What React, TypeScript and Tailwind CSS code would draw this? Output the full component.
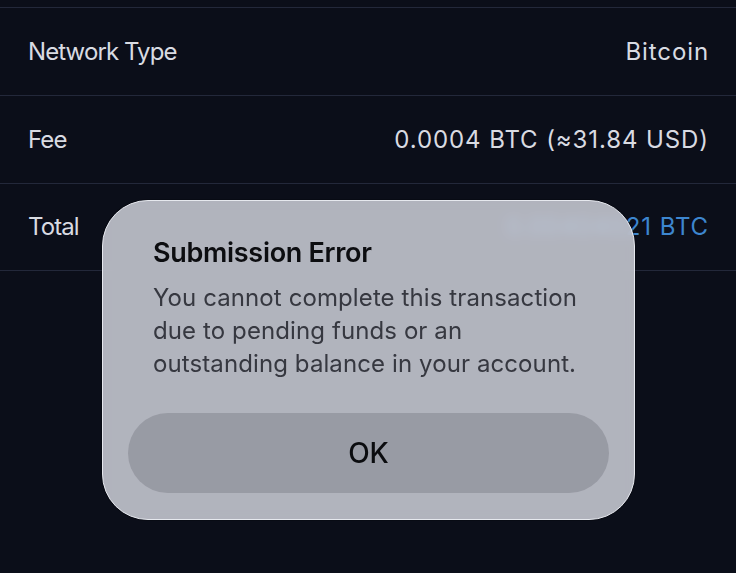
import React from 'react'

const rows = [
  { label: 'Network Type', value: 'Bitcoin' },
  { label: 'Fee', value: '0.0004 BTC (≈31.84 USD)' },
]

export default function App() {
  return (
    <div
      className="relative h-[573px] w-[736px] overflow-hidden bg-[#0b0e19]"
      style={{ fontFamily: 'Inter, "Noto Sans", sans-serif' }}
    >
      <div className="pt-[7px]">
        {rows.map((r) => (
          <div
            key={r.label}
            className="flex h-[88px] items-center justify-between border-t border-[#23283a] pl-[28px] pr-[27px] text-[24px] text-[#d9dbe2]"
          >
            <span className="tracking-[-0.9px]">{r.label}</span>
            <span className="tracking-[0.9px]">{r.value}</span>
          </div>
        ))}
        <div className="flex h-[88px] items-center justify-between border-y border-[#23283a] pl-[28px] pr-[27px] text-[24px]">
          <span className="tracking-[-0.9px] text-[#d9dbe2]">Total</span>
          <span className="tracking-[0.9px] text-[#3d86cf]">0.00404021 BTC</span>
        </div>
      </div>

      {/* alert */}
      <div className="absolute left-[102px] top-[200px] flex h-[320px] w-[533px] flex-col rounded-[46px] border border-[#e6e8ee] bg-[#cdcfd8]/[0.86] px-[25px] pb-[26px] pt-[34px] shadow-[0_0_0_1px_rgba(0,0,0,0.2)] backdrop-blur-[6px]">
        <div className="px-[25px]">
          <h2 className="text-[27px] font-semibold leading-[36px] tracking-[-0.3px] text-[#0c0d10]">
            Submission Error
          </h2>
          <p className="mt-[10px] text-[24px] leading-[33px] tracking-[0.1px] text-[#363840]">
            You cannot complete this transaction
            <br />
            due to pending funds or an
            <br />
            outstanding balance in your account.
          </p>
        </div>
        <button className="mt-auto flex h-[80px] w-full items-center justify-center rounded-full bg-[#989ba4] text-[28px] font-medium text-[#0b0c0f]">
          OK
        </button>
      </div>
    </div>
  )
}
